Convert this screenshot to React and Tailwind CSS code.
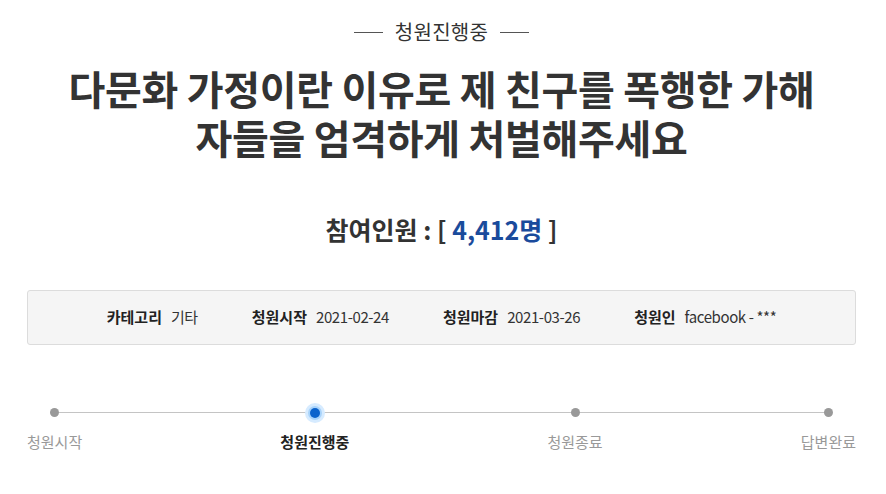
const steps = [
  { label: "청원시작", active: false },
  { label: "청원진행중", active: true },
  { label: "청원종료", active: false },
  { label: "답변완료", active: false },
];

const info = [
  { k: "카테고리", v: "기타" },
  { k: "청원시작", v: "2021-02-24" },
  { k: "청원마감", v: "2021-03-26" },
  { k: "청원인", v: "facebook - ***" },
];

export default function App() {
  return (
    <div
      className="w-[886px] h-[494px] bg-white overflow-hidden pl-[27px] pr-[30px]"
      style={{ fontFamily: '"Noto Sans CJK KR", "Noto Sans", sans-serif' }}
    >
      {/* Status */}
      <div className="flex items-center justify-center gap-[12px] pt-[18px] h-[46px]">
        <span className="w-[29px] h-px bg-[#555]" />
        <span className="text-[20px] leading-[28px] text-[#333] tracking-[0.3px]">청원진행중</span>
        <span className="w-[29px] h-px bg-[#555]" />
      </div>

      {/* Title */}
      <h1 className="mt-[18px] text-center text-[40px] leading-[49px] font-bold text-[#333] tracking-[-0.3px]">
        다문화 가정이란 이유로 제 친구를 폭행한 가해
        <br />
        자들을 엄격하게 처벌해주세요
      </h1>

      {/* Count */}
      <div className="mt-[50px] text-center text-[25px] leading-[34px] font-bold text-[#333]">
        참여인원 : [ <span className="text-[#1a4b9c]">4,412명</span> ]
      </div>

      {/* Info box */}
      <div className="mt-[44px] h-[55px] flex items-center justify-center gap-[54px] bg-[#f5f5f5] border border-[#dcdcdc] rounded-[3px] text-[15px] text-[#333]">
        {info.map((it) => (
          <div key={it.k} className="flex items-center gap-[9px]">
            <span className="font-bold text-[#222]">{it.k}</span>
            <span className="tracking-[-0.4px]">{it.v}</span>
          </div>
        ))}
      </div>

      {/* Progress */}
      <div className="relative mt-[61px] flex justify-between">
        <div className="absolute left-[26px] right-[27px] top-[6px] h-px bg-[#c4c4c4]" />
        {steps.map((s) => (
          <div key={s.label} className="relative flex flex-col items-center">
            <div className="h-[13px] flex items-center justify-center">
              {s.active ? (
                <span className="w-[20px] h-[20px] rounded-full bg-[#d6ebff] flex items-center justify-center">
                  <span className="w-[14px] h-[14px] rounded-full bg-[#a8d3fb] flex items-center justify-center">
                    <span className="w-[10px] h-[10px] rounded-full bg-[#0a62cc]" />
                  </span>
                </span>
              ) : (
                <span className="w-[9px] h-[9px] rounded-full bg-[#999]" />
              )}
            </div>
            <span
              className={
                s.active
                  ? "mt-[12px] text-[15px] leading-[22px] font-bold text-[#222]"
                  : "mt-[12px] text-[15px] leading-[22px] text-[#999]"
              }
            >
              {s.label}
            </span>
          </div>
        ))}
      </div>
    </div>
  );
}
